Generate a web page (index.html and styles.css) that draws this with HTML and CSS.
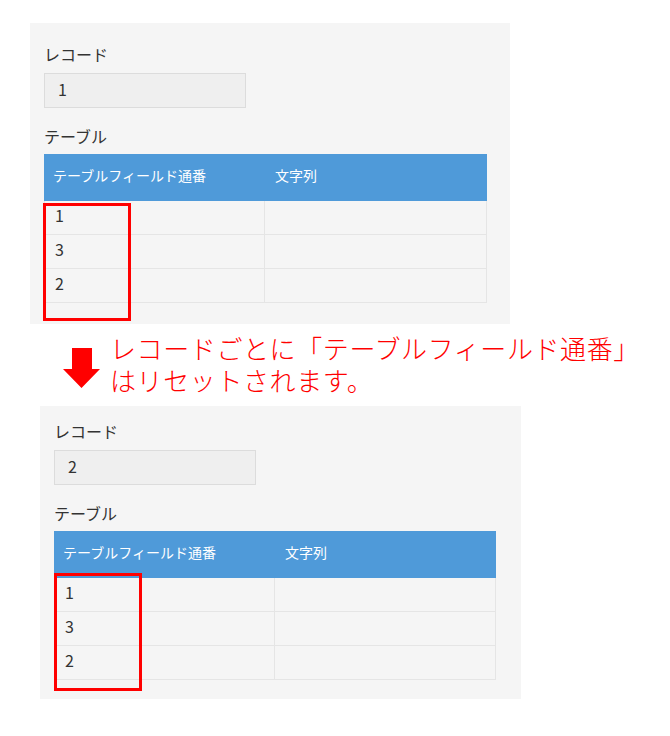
FILE: index.html
```html
<!DOCTYPE html>
<html lang="ja">
<head>
<meta charset="utf-8">
<title>テーブルフィールド通番</title>
<link rel="stylesheet" href="styles.css">
</head>
<body>
  <section class="panel panel-first">
    <div class="label">レコード</div>
    <div class="input">1</div>
    <div class="label label-table">テーブル</div>
    <div class="table">
      <div class="thead">
        <div class="th th-first">テーブルフィールド通番</div>
        <div class="th">文字列</div>
      </div>
      <div class="tbody">
        <div class="tr"><div class="td td-num">1</div><div class="td"></div></div>
        <div class="tr"><div class="td td-num">3</div><div class="td"></div></div>
        <div class="tr"><div class="td td-num">2</div><div class="td"></div></div>
      </div>
      <div class="highlight highlight-first"></div>
    </div>
  </section>

  <div class="note">
    <svg class="arrow" width="37" height="40" viewBox="0 0 37 40" aria-hidden="true">
      <polygon points="9,0 29,0 29,21 37,21 18.5,40 0,21 9,21" fill="#ff0000"/>
    </svg>
    <p class="note-text"><span class="note-line">レコードごとに「テーブルフィールド通番」</span><span class="note-line">はリセットされます。</span></p>
  </div>

  <section class="panel panel-second">
    <div class="label">レコード</div>
    <div class="input">2</div>
    <div class="label label-table">テーブル</div>
    <div class="table">
      <div class="thead">
        <div class="th th-first">テーブルフィールド通番</div>
        <div class="th">文字列</div>
      </div>
      <div class="tbody">
        <div class="tr"><div class="td td-num">1</div><div class="td"></div></div>
        <div class="tr"><div class="td td-num">3</div><div class="td"></div></div>
        <div class="tr"><div class="td td-num">2</div><div class="td"></div></div>
      </div>
      <div class="highlight highlight-second"></div>
    </div>
  </section>
</body>
</html>
```

FILE: styles.css
```css
html, body {
  margin: 0;
  padding: 0;
  background: #ffffff;
}

body {
  font-family: "Noto Sans CJK JP", "Noto Sans", sans-serif;
  color: #333333;
}

.panel {
  box-sizing: border-box;
  background: #f5f5f5;
}

.panel-first {
  width: 480px;
  margin: 23px 0 0 30px;
  padding: 19px 23px 21px 14px;
}

.panel-second {
  width: 481px;
  margin: 0 0 0 40px;
  padding: 13px 25px 19px 14px;
}

.label {
  font-size: 16px;
  line-height: 24px;
  height: 24px;
}

.label-table {
  margin-top: 16px;
}

.input {
  box-sizing: border-box;
  width: 202px;
  height: 35px;
  margin-top: 7px;
  padding-left: 13px;
  background: #efefef;
  border: 1px solid #dcdcdc;
  font-size: 16px;
  line-height: 31px;
}

.table {
  position: relative;
  margin-top: 6px;
}

.thead {
  box-sizing: border-box;
  display: grid;
  grid-template-columns: 220px 1fr;
  align-items: center;
  height: 47px;
  padding-bottom: 5px;
  background: #4f9ad9;
  color: #ffffff;
  font-size: 14px;
}

.th {
  padding-left: 11px;
}

.th-first {
  padding-left: 9px;
}

.tbody {
  border-left: 1px solid #e5e5e5;
  border-right: 1px solid #e5e5e5;
}

.tr {
  box-sizing: border-box;
  display: grid;
  grid-template-columns: 219px 1fr;
  height: 34px;
  border-bottom: 1px solid #e5e5e5;
}

.td + .td {
  border-left: 1px solid #e5e5e5;
}

.td-num {
  padding-left: 10px;
  font-size: 16px;
  line-height: 29px;
}

.highlight {
  position: absolute;
  box-sizing: border-box;
  width: 88px;
  height: 118px;
  border: 3px solid #ff0000;
}

.highlight-first {
  left: -1px;
  top: 49px;
}

.highlight-second {
  left: 0;
  top: 42px;
}

.note {
  display: flex;
  align-items: flex-start;
  gap: 10px;
  margin: 8px 0 10px 63px;
}

.arrow {
  flex: none;
  margin-top: 16px;
}

.note-text {
  margin: 0;
  color: #ff0000;
  font-size: 26px;
  font-weight: 300;
  letter-spacing: 0.6px;
  white-space: nowrap;
}

.note-line {
  display: block;
  height: 32px;
  line-height: 32px;
}
```
